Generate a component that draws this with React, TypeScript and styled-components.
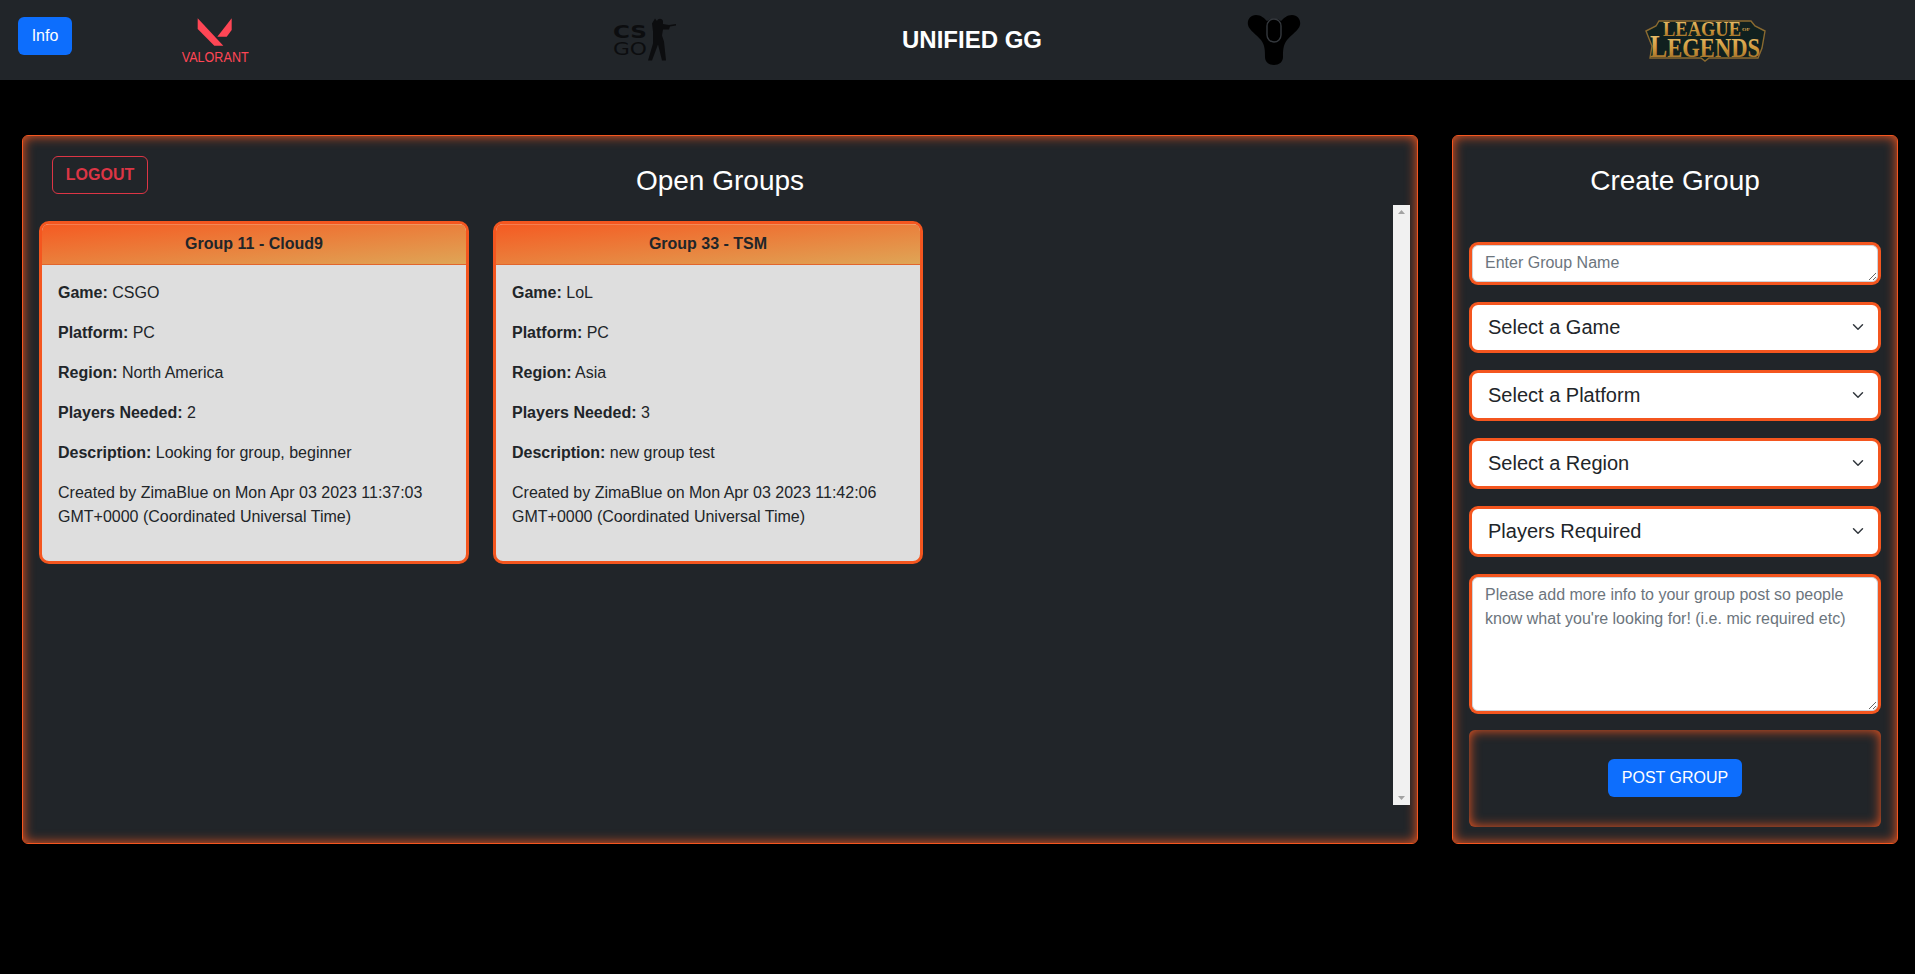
import React from 'react';
import styled, { createGlobalStyle } from 'styled-components';

const FONT = '"Liberation Sans", Arial, sans-serif';
const ORANGE = '#f4561f';
const CHEVRON =
  "data:image/svg+xml,%3csvg xmlns='http://www.w3.org/2000/svg' viewBox='0 0 16 16'%3e%3cpath fill='none' stroke='%23343a40' stroke-linecap='round' stroke-linejoin='round' stroke-width='2' d='m2 5 6 6 6-6'/%3e%3c/svg%3e";

const GlobalStyle = createGlobalStyle`
  * { box-sizing: border-box; }
  html, body { margin: 0; background: #000; }
  body { font-family: ${FONT}; font-size: 16px; line-height: 1.5; color: #212529; }
`;

const Nav = styled.nav`
  display: flex;
  align-items: center;
  height: 80px;
  padding-left: 18px;
  background: #212529;
`;

const Slot = styled.div<{ $left: number }>`
  display: flex;
  flex: none;
  margin-left: ${(p) => p.$left}px;
`;

const InfoButton = styled.button`
  flex: none;
  align-self: flex-start;
  width: 54px;
  height: 38px;
  margin-top: 17px;
  padding: 0;
  border: 0;
  border-radius: 6px;
  background: #0d6efd;
  color: #fff;
  font: 16px ${FONT};
`;

const Brand = styled.div`
  width: 140px;
  color: #fff;
  font-size: 24px;
  font-weight: 700;
  text-align: center;
  white-space: nowrap;
`;

const Main = styled.main`
  display: flex;
  gap: 34px;
  padding: 55px 17px 0 22px;
`;

const Panel = styled.section<{ $width?: number }>`
  display: flex;
  flex-direction: column;
  flex: ${(p) => (p.$width ? `0 0 ${p.$width}px` : '1 1 0')};
  min-width: 0;
  height: 709px;
  border: 1px solid ${ORANGE};
  border-radius: 6px;
  background: #212529;
  box-shadow: inset 0 0 12px ${ORANGE};
`;

const PanelHeader = styled.header`
  display: grid;
  grid-template-columns: 1fr auto 1fr;
  align-items: start;
  flex: none;
  height: 69px;
  padding: 20px 29px 0;
`;

const Title = styled.h3`
  margin: 8px 0 0;
  color: #fff;
  font-size: 28px;
  font-weight: 400;
  line-height: 1.2;
  text-align: center;
`;

const LogoutButton = styled.button`
  justify-self: start;
  width: 96px;
  height: 38px;
  padding: 0;
  border: 1px solid #dc3545;
  border-radius: 6px;
  background: transparent;
  color: #dc3545;
  font: 700 16px ${FONT};
`;

const Scroller = styled.div`
  display: flex;
  flex: none;
  height: 600px;
  margin: 0 7px 0 16px;
`;

const CardList = styled.div`
  display: flex;
  flex: 1;
  align-items: flex-start;
  gap: 24px;
  padding-top: 16px;
`;

const Card = styled.article`
  flex: 0 0 430px;
  overflow: hidden;
  border: 3px solid ${ORANGE};
  border-radius: 10px;
  background: #dedede;
`;

const CardHeader = styled.div`
  height: 41px;
  border-bottom: 1px solid #e2652c;
  background: linear-gradient(to bottom right, #f55a22, #dfa556);
  box-shadow: inset 0 1px 0 rgba(255, 255, 255, 0.2);
  font-weight: 700;
  line-height: 40px;
  text-align: center;
`;

const CardBody = styled.div`
  padding: 16px;
`;

const Line = styled.p`
  margin: 0 0 16px;
`;

const Track = styled.div`
  display: flex;
  flex: 0 0 17px;
  flex-direction: column;
  justify-content: space-between;
  align-items: center;
  padding: 5px 0;
  background: #f1f1f1;
`;

const Form = styled.form`
  display: flex;
  flex-direction: column;
  gap: 17px;
  padding: 0 16px;
`;

const CreateTitle = styled(Title)`
  margin: 28px 0 44px;
`;

const NameInput = styled.textarea<{ $height: number }>`
  display: block;
  width: calc(100% - 6px);
  height: ${(p) => p.$height}px;
  margin: 3px;
  padding: 5px 12px 6px;
  border: 1px solid #ced4da;
  border-radius: 6px;
  background: #fff;
  box-shadow: 0 0 0 3px ${ORANGE};
  color: #212529;
  font: 16px/24px ${FONT};
  outline: 0;
  resize: vertical;

  &::placeholder {
    color: #6c757d;
    opacity: 1;
  }
`;

const Picker = styled.select`
  display: block;
  width: 100%;
  height: 51px;
  padding: 0 36px 0 16px;
  border: 3px solid ${ORANGE};
  border-radius: 9px;
  background: #fff url("${CHEVRON}") no-repeat right 12px center / 16px 12px;
  color: #212529;
  font: 20px ${FONT};
  appearance: none;
`;

const SubmitBox = styled.div`
  display: flex;
  align-items: center;
  justify-content: center;
  height: 97px;
  margin-top: -1px;
  border-radius: 6px;
  box-shadow: inset 0 0 12px ${ORANGE};
`;

const PostButton = styled.button`
  width: 134px;
  height: 38px;
  padding: 0;
  border: 0;
  border-radius: 6px;
  background: #0d6efd;
  color: #fff;
  font: 16px ${FONT};
`;

const ValorantLogo = () => (
  <svg width="68" height="50" viewBox="0 -2 68 50">
    <g fill="#ff4655">
      <polygon points="16.7,1.3 16.7,12 33.3,28.7 42.3,28.7" />
      <polygon points="50.7,1.3 50.7,13 45.7,19.7 36.3,19.7" />
      <text x="0.7" y="44.7" fontFamily="Liberation Sans" fontSize="14" textLength="67" lengthAdjust="spacingAndGlyphs">
        VALORANT
      </text>
    </g>
  </svg>
);

const CsgoLogo = () => (
  <svg width="68" height="44" viewBox="0 0 68 44">
    <g fill="#0c0d0f">
      <text x="1" y="20" fontFamily="DejaVu Sans" fontSize="18" fontWeight="700" textLength="34" lengthAdjust="spacingAndGlyphs">
        CS
      </text>
      <text x="1" y="37" fontFamily="DejaVu Sans" fontSize="18" textLength="34" lengthAdjust="spacingAndGlyphs">
        GO
      </text>
      <path d="M45 3c1-3 5-3 6 0l0 3 6 1 7-1v1.500l-6 1-1 3h-6l-1 6 2 6 2 19h-4l-4-16-6 16h-4l5-17 0-12-1-8 3-5z" />
    </g>
  </svg>
);

const DestinyLogo = () => (
  <svg width="54" height="50" viewBox="0 0 54 50">
    <path
      fill="#000"
      d="M9 0C14 0 17 3 20 6C24 3 30 3 34 6C37 3 40 0 45 0C51 0 54 5 53 10C52 15 44 20 40 25C36 30 36 36 36 42C36 47 32 50 27 50C22 50 18 47 18 42C18 36 18 30 14 25C10 20 2 15 1 10C0 5 3 0 9 0Z"
    />
    <rect x="20" y="4" width="14" height="23" rx="7" fill="#000" stroke="#34383d" strokeWidth="1.4" />
  </svg>
);

const LeagueLogo = () => (
  <svg width="121" height="56" viewBox="0 -6 121 56">
    <defs>
      <linearGradient id="lolGold" x1="0" y1="0" x2="0" y2="1">
        <stop offset="0" stopColor="#f0cf80" />
        <stop offset="0.55" stopColor="#d0983c" />
        <stop offset="1" stopColor="#8a5e20" />
      </linearGradient>
    </defs>
    <path
      fill="#10201f"
      stroke="#8a6a30"
      strokeWidth="1.4"
      d="M1 13L11 8L14 3H106L110 8L120 13L117 30L113 40H64L60 43L56 40H5L7 28Z"
    />
    <g fill="url(#lolGold)" fontFamily="Liberation Serif" fontWeight="700">
      <text x="18" y="18" fontSize="22" textLength="78" lengthAdjust="spacingAndGlyphs">
        LEAGUE
      </text>
      <text x="97" y="13" fontSize="5" textLength="8" lengthAdjust="spacingAndGlyphs">
        OF
      </text>
      <text x="5" y="39" fontSize="27" textLength="110" lengthAdjust="spacingAndGlyphs">
        <tspan fontSize="31">L</tspan>EGENDS
      </text>
    </g>
  </svg>
);

const ArrowUp = () => (
  <svg width="7" height="4" viewBox="0 0 7 4">
    <polygon points="3.5,0 7,4 0,4" fill="#a3a3a3" />
  </svg>
);

const ArrowDown = () => (
  <svg width="7" height="4" viewBox="0 0 7 4">
    <polygon points="0,0 7,0 3.5,4" fill="#a3a3a3" />
  </svg>
);

const groups = [
  {
    title: 'Group 11 - Cloud9',
    game: 'CSGO',
    platform: 'PC',
    region: 'North America',
    players: '2',
    description: 'Looking for group, beginner',
    created: 'Created by ZimaBlue on Mon Apr 03 2023 11:37:03 GMT+0000 (Coordinated Universal Time)'
  },
  {
    title: 'Group 33 - TSM',
    game: 'LoL',
    platform: 'PC',
    region: 'Asia',
    players: '3',
    description: 'new group test',
    created: 'Created by ZimaBlue on Mon Apr 03 2023 11:42:06 GMT+0000 (Coordinated Universal Time)'
  }
];

const pickers = ['Select a Game', 'Select a Platform', 'Select a Region', 'Players Required'];

const App: React.FC = () => {
  return (
    <>
      <GlobalStyle />
      <Nav>
        <InfoButton>Info</InfoButton>
        <Slot $left={109}>
          <ValorantLogo />
        </Slot>
        <Slot $left={363}>
          <CsgoLogo />
        </Slot>
        <Slot $left={222}>
          <Brand>UNIFIED GG</Brand>
        </Slot>
        <Slot $left={205}>
          <DestinyLogo />
        </Slot>
        <Slot $left={344}>
          <LeagueLogo />
        </Slot>
      </Nav>
      <Main>
        <Panel>
          <PanelHeader>
            <LogoutButton>LOGOUT</LogoutButton>
            <Title>Open Groups</Title>
          </PanelHeader>
          <Scroller>
            <CardList>
              {groups.map((group) => (
                <Card key={group.title}>
                  <CardHeader>{group.title}</CardHeader>
                  <CardBody>
                    <Line>
                      <b>Game:</b> {group.game}
                    </Line>
                    <Line>
                      <b>Platform:</b> {group.platform}
                    </Line>
                    <Line>
                      <b>Region:</b> {group.region}
                    </Line>
                    <Line>
                      <b>Players Needed:</b> {group.players}
                    </Line>
                    <Line>
                      <b>Description:</b> {group.description}
                    </Line>
                    <Line>{group.created}</Line>
                  </CardBody>
                </Card>
              ))}
            </CardList>
            <Track>
              <ArrowUp />
              <ArrowDown />
            </Track>
          </Scroller>
        </Panel>
        <Panel $width={446}>
          <CreateTitle>Create Group</CreateTitle>
          <Form>
            <NameInput $height={37} placeholder="Enter Group Name" />
            {pickers.map((label) => (
              <Picker key={label} defaultValue={label}>
                <option>{label}</option>
              </Picker>
            ))}
            <NameInput
              $height={134}
              placeholder="Please add more info to your group post so people know what you're looking for! (i.e. mic required etc)"
            />
            <SubmitBox>
              <PostButton type="button">POST GROUP</PostButton>
            </SubmitBox>
          </Form>
        </Panel>
      </Main>
    </>
  );
};

export default App;
